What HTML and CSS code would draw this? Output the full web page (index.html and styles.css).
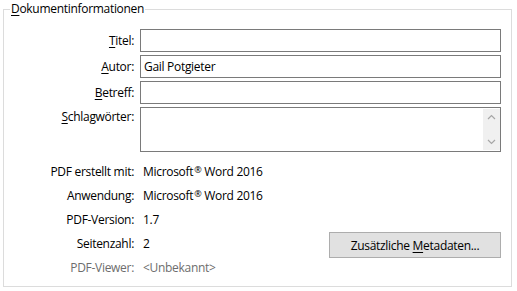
FILE: index.html
```html
<!DOCTYPE html>
<html lang="de">
<head>
    <meta charset="UTF-8">
    <title>Dokumenteigenschaften - Beschreibung</title>
    <link rel="stylesheet" href="styles.css">
</head>
<body>
    <fieldset class="doc-info">
        <legend class="doc-info-title"><u>D</u>okumentinformationen</legend>

        <div class="info-grid">
            <!-- Editable fields -->
            <label class="field-label" for="title"><u>T</u>itel:</label>
            <input class="field-input" id="title" type="text" value="">

            <label class="field-label" for="author"><u>A</u>utor:</label>
            <input class="field-input" id="author" type="text" value="Gail Potgieter">

            <label class="field-label" for="subject"><u>B</u>etreff:</label>
            <input class="field-input" id="subject" type="text" value="">

            <label class="field-label field-label-top"><u>S</u>chlagwörter:</label>
            <div class="keywords">
                <div class="keywords-text"></div>
                <div class="scrollbar">
                    <svg width="9" height="6" viewBox="0 0 9 6"><path d="M1 5 L4.5 1.5 L8 5" fill="none" stroke="#a6a6a6" stroke-width="1.2"/></svg>
                    <svg width="9" height="6" viewBox="0 0 9 6"><path d="M1 1 L4.5 4.5 L8 1" fill="none" stroke="#a6a6a6" stroke-width="1.2"/></svg>
                </div>
            </div>

            <!-- Read-only info -->
            <div class="info-label first">PDF erstellt mit:</div>
            <div class="info-value first">Microsoft<sup class="reg">®</sup> Word 2016</div>

            <div class="info-label">Anwendung:</div>
            <div class="info-value">Microsoft<sup class="reg">®</sup> Word 2016</div>

            <div class="info-label">PDF-Version:</div>
            <div class="info-value">1.7</div>

            <div class="info-label">Seitenzahl:</div>
            <div class="info-value with-button">
                <span>2</span>
                <button class="meta-button">Zusätzliche <u>M</u>etadaten...</button>
            </div>

            <div class="info-label disabled">PDF-Viewer:</div>
            <div class="info-value disabled">&lt;Unbekannt&gt;</div>
        </div>
    </fieldset>
</body>
</html>
```

FILE: styles.css
```css
/* Reset */
body, html {
    margin: 0;
    padding: 0;
    background: #ffffff;
    font-family: "Open Sans", "Noto Sans", sans-serif;
    font-size: 12px;
    letter-spacing: -0.3px;
    color: #000;
}

/* Group box */
.doc-info {
    box-sizing: border-box;
    width: 509px;
    height: 287px;
    margin: 0 0 0 3px;
    padding: 11px 10px 0 0;
    border: 1px solid #dcdcdc;
}

.doc-info-title {
    margin-left: 6px;
    padding: 0 1px;
    line-height: 18px;
}

u {
    text-decoration-thickness: 1px;
    text-underline-offset: 2px;
}

/* Grid */
.info-grid {
    display: grid;
    grid-template-columns: 131px 1fr;
    column-gap: 5px;
    row-gap: 3px;
}

.field-label {
    text-align: right;
    padding-right: 1px;
    line-height: 23px;
}

.field-label-top {
    line-height: 16px;
    padding-top: 2px;
}

.field-input {
    box-sizing: border-box;
    width: 100%;
    height: 23px;
    margin: 0;
    padding: 0 3px;
    border: 1px solid #7a7a7a;
    font: inherit;
    letter-spacing: inherit;
    outline: none;
}

/* Keywords box with scrollbar */
.keywords {
    box-sizing: border-box;
    height: 45px;
    border: 1px solid #7a7a7a;
    display: flex;
    padding: 1px 0 1px 0;
}

.keywords-text {
    flex: 1;
}

.scrollbar {
    width: 17px;
    background: #f0f0f0;
    display: flex;
    flex-direction: column;
    justify-content: space-between;
    align-items: center;
    padding: 5px 0 5px;
}

/* Read-only rows */
.info-label {
    text-align: right;
    padding-right: 1px;
    line-height: 21px;
    height: 21px;
}

.info-value {
    padding-left: 3px;
    line-height: 21px;
    height: 21px;
}

.first {
    margin-top: 6px;
}

.reg {
    font-size: 9px;
    vertical-align: 3px;
    line-height: 0;
    margin-left: 1px;
}

.with-button {
    display: flex;
    justify-content: space-between;
    align-items: flex-start;
}

.meta-button {
    box-sizing: border-box;
    width: 172px;
    height: 26px;
    margin: -1px 0 -4px;
    padding: 0;
    background: #e1e1e1;
    border: 1px solid #adadad;
    font: inherit;
    letter-spacing: inherit;
    color: #000;
}

.disabled {
    color: #6d6d6d;
}
```
